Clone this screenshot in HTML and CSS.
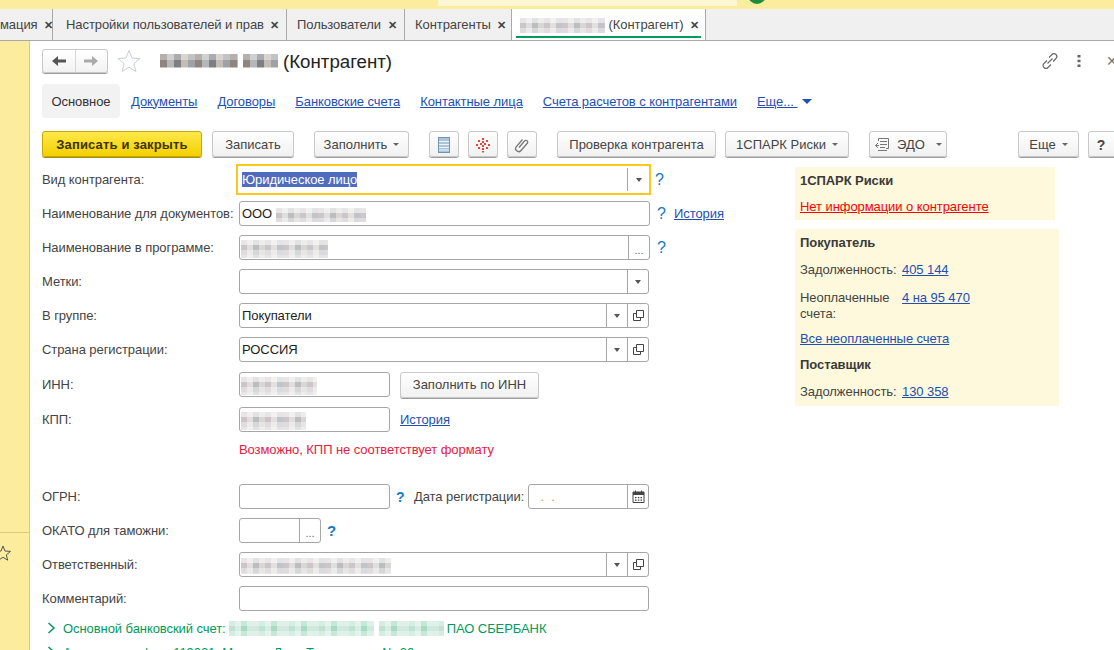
FILE: index.html
```html
<!DOCTYPE html>
<html lang="ru">
<head>
  <meta charset="UTF-8" />
  <title>(Контрагент)</title>
  <link rel="stylesheet" href="styles.css">
</head>
<body>

<!-- Top strip, mostly cut off by the window -->
<div class="top-strip">
  <span class="strip-text">Информация для пользователя</span>
  <div class="strip-box"></div>
  <div class="strip-dot"></div>
  <span class="strip-text strip-text-right">Подключение к сервису</span>
</div>

<!-- Open tabs -->
<div class="tabs">
  <div class="tab tab-cut">мация <span class="tab-x">✕</span></div>
  <div class="tab tab-settings">Настройки пользователей и прав <span class="tab-x">✕</span></div>
  <div class="tab tab-users">Пользователи <span class="tab-x">✕</span></div>
  <div class="tab tab-partners">Контрагенты <span class="tab-x">✕</span></div>
  <div class="tab tab-active"><span class="smear smear-tab"></span> (Контрагент) <span class="tab-x">✕</span></div>
</div>

<div class="page">
  <!-- Left yellow panel -->
  <div class="sidebar">
    <div class="side-line"></div>
    <svg class="side-star" width="18" height="18" viewBox="0 0 18 18"><path d="M9 2l2 5 5.500.4-4.200 3.500 1.400 5.300L9 13.300 4.300 16.200l1.400-5.300L1.500 7.400 7 7z" fill="none" stroke="#555" stroke-width="1"/></svg>
  </div>

  <div class="main">
    <!-- Title -->
    <div class="title-row">
      <div class="nav-arrows">
        <div class="nav-arrow nav-left">
          <svg width="16" height="12" viewBox="0 0 16 12"><path d="M1 6l6-5v3.500h8v3H7V11z" fill="#555"/></svg>
        </div>
        <div class="nav-arrow">
          <svg width="16" height="12" viewBox="0 0 16 12"><path d="M15 6L9 1v3.500H1v3h8V11z" fill="#aaa"/></svg>
        </div>
      </div>
      <svg class="title-star" width="24" height="24" viewBox="0 0 24 24"><path d="M12 1.500l3 7.500 8 .6-6.100 5.100 2 7.800L12 18.200l-6.900 4.300 2-7.800L1 9.600 9 9z" fill="#fff" stroke="#c9ced4" stroke-width="1"/></svg>
      <span class="smear smear-dark smear-title"></span>
      <span class="smear smear-dark smear-title2"></span>
      <h1>(Контрагент)</h1>
      <div class="title-icons">
        <svg width="18" height="18" viewBox="0 0 18 18"><g fill="none" stroke="#666" stroke-width="1.100"><path d="M8 5.500l3-3a2.800 2.800 0 0 1 4 4l-3 3"/><path d="M10 12.500l-3 3a2.800 2.800 0 0 1-4-4l3-3"/><path d="M6.500 11.500l5-5"/></g></svg>
        <svg class="kebab" width="4" height="14" viewBox="0 0 4 14"><g fill="#666"><rect x="0.500" y="1" width="3" height="2.500"/><rect x="0.500" y="5.700" width="3" height="2.500"/><rect x="0.500" y="10.500" width="3" height="2.500"/></g></svg>
        <span class="close-x">✕</span>
      </div>
    </div>

    <!-- Form sections -->
    <div class="sections">
      <div class="section section-active">Основное</div>
      <a class="section">Документы</a>
      <a class="section">Договоры</a>
      <a class="section">Банковские счета</a>
      <a class="section">Контактные лица</a>
      <a class="section">Счета расчетов с контрагентами</a>
      <a class="section section-more">Еще... <i class="more-arrow"></i></a>
    </div>

    <!-- Command bar -->
    <div class="toolbar">
      <button class="btn btn-main">Записать и закрыть</button>
      <button class="btn btn-save">Записать</button>
      <button class="btn btn-fill">Заполнить <i class="caret"></i></button>
      <button class="btn btn-icon">
        <svg width="14" height="18" viewBox="0 0 14 18"><rect x="1.500" y="1.500" width="11" height="15" fill="#a9c4dc" stroke="#6f93b1"/><path d="M2 5.500h10M2 8.500h10M2 11.500h10M2 14h10" stroke="#eef4f9"/></svg>
      </button>
      <button class="btn btn-icon btn-spark">
        <svg width="16" height="16" viewBox="0 0 16 16"><g fill="#e0493a"><rect x="7" y="1" width="2" height="2"/><rect x="3" y="3" width="2" height="2"/><rect x="11" y="3" width="2" height="2"/><rect x="7" y="4" width="2" height="2"/><rect x="1" y="7" width="2" height="2"/><rect x="5" y="6" width="2" height="2"/><rect x="9" y="6" width="2" height="2"/><rect x="13" y="7" width="2" height="2"/><rect x="7" y="8" width="2" height="2"/><rect x="3" y="10" width="2" height="2"/><rect x="11" y="10" width="2" height="2"/><rect x="7" y="11" width="2" height="2"/><rect x="7" y="14" width="2" height="1.500"/></g></svg>
      </button>
      <button class="btn btn-icon btn-clip">
        <svg width="16" height="16" viewBox="0 0 16 16"><path d="M5 10.500l5.500-6.500a1.800 1.800 0 0 1 2.800 2.300L7 13.500a3 3 0 0 1-4.600-3.900L8.500 2.500" fill="none" stroke="#777" stroke-width="1.300"/></svg>
      </button>
      <button class="btn btn-check">Проверка контрагента</button>
      <button class="btn btn-spark-risk">1СПАРК Риски <i class="caret"></i></button>
      <button class="btn btn-edo">
        <svg width="18" height="16" viewBox="0 0 18 16"><g fill="none" stroke="#777"><path d="M4.500 4V1.500h10v10H12"/><path d="M6 4.500h7M6 7.500h7M6 10.500h5M4 13.500h9"/><path d="M4 6L1.500 8.500 4 11"/><path d="M1.500 8.500H5"/></g></svg>
        ЭДО <i class="caret"></i>
      </button>
      <button class="btn btn-more">Еще <i class="caret"></i></button>
      <button class="btn btn-help">?</button>
    </div>

    <div class="content">
      <!-- Fields -->
      <div class="form">
        <div class="row">
          <label>Вид контрагента:</label>
          <div class="field field-focus">
            <span class="field-text"><span class="selected">Юридическое лицо</span></span>
            <span class="field-btn field-btn-focus"><i class="caret caret-dark"></i></span>
          </div>
          <span class="help help-focus">?</span>
        </div>
        <div class="row">
          <label>Наименование для документов:</label>
          <div class="field field-wide">
            <span class="field-text">ООО <span class="smear smear-name"></span></span>
          </div>
          <span class="help">?</span>
          <a class="link history">История</a>
        </div>
        <div class="row">
          <label>Наименование в программе:</label>
          <div class="field field-wide">
            <span class="field-text"><span class="smear smear-short"></span></span>
            <span class="field-btn field-dots">...</span>
          </div>
          <span class="help">?</span>
        </div>
        <div class="row">
          <label>Метки:</label>
          <div class="field">
            <span class="field-text"></span>
            <span class="field-btn"><i class="caret caret-dark"></i></span>
          </div>
        </div>
        <div class="row">
          <label>В группе:</label>
          <div class="field">
            <span class="field-text">Покупатели</span>
            <span class="field-btn"><i class="caret caret-dark"></i></span>
            <span class="field-btn"><svg width="11" height="11" viewBox="0 0 11 11"><path d="M3.500.5h7v7h-7zM3.500 3.500H.5v7h7V7.500" fill="none" stroke="#444"/></svg></span>
          </div>
        </div>
        <div class="row">
          <label>Страна регистрации:</label>
          <div class="field">
            <span class="field-text">РОССИЯ</span>
            <span class="field-btn"><i class="caret caret-dark"></i></span>
            <span class="field-btn"><svg width="11" height="11" viewBox="0 0 11 11"><path d="M3.500.5h7v7h-7zM3.500 3.500H.5v7h7V7.500" fill="none" stroke="#444"/></svg></span>
          </div>
        </div>
        <div class="row row-tall">
          <label>ИНН:</label>
          <div class="field field-mid">
            <span class="field-text"><span class="smear smear-inn"></span></span>
          </div>
          <button class="btn btn-inn">Заполнить по ИНН</button>
        </div>
        <div class="row row-tall">
          <label>КПП:</label>
          <div class="field field-mid">
            <span class="field-text"><span class="smear smear-kpp"></span></span>
          </div>
          <a class="link kpp-history">История</a>
        </div>
        <div class="error">Возможно, КПП не соответствует формату</div>
        <div class="row">
          <label>ОГРН:</label>
          <div class="field field-mid">
            <span class="field-text"></span>
          </div>
          <span class="help help-ogrn">?</span>
          <span class="date-label">Дата регистрации:</span>
          <div class="field field-date">
            <span class="field-text date-mask">&nbsp;.&nbsp;&nbsp;.</span>
            <span class="field-btn"><svg width="13" height="13" viewBox="0 0 13 13"><path d="M1 2h11v10.500H1z" fill="none" stroke="#444"/><path d="M1 2h11v3H1z" fill="#444"/><path d="M3.500.5v2M9.500.5v2" stroke="#444"/><path d="M3 7h1.500v1.300H3zM5.800 7h1.500v1.300H5.800zM8.500 7H10v1.300H8.500zM3 9.500h1.500v1.300H3zM5.800 9.500h1.500v1.300H5.800zM8.500 9.500H10v1.300H8.500z" fill="#444"/></svg></span>
          </div>
        </div>
        <div class="row">
          <label>ОКАТО для таможни:</label>
          <div class="field field-small">
            <span class="field-text"></span>
            <span class="field-btn field-dots">...</span>
          </div>
          <span class="help help-okato">?</span>
        </div>
        <div class="row">
          <label>Ответственный:</label>
          <div class="field">
            <span class="field-text"><span class="smear smear-person"></span></span>
            <span class="field-btn"><i class="caret caret-dark"></i></span>
            <span class="field-btn"><svg width="11" height="11" viewBox="0 0 11 11"><path d="M3.500.5h7v7h-7zM3.500 3.500H.5v7h7V7.500" fill="none" stroke="#444"/></svg></span>
          </div>
        </div>
        <div class="row">
          <label>Комментарий:</label>
          <div class="field">
            <span class="field-text"></span>
          </div>
        </div>
        <div class="group">
          <svg width="9" height="12" viewBox="0 0 9 12"><path d="M1.500 1l5.500 5-5.500 5" fill="none" stroke="#009a5c" stroke-width="1.500"/></svg>
          <span>Основной банковский счет:</span>
          <span class="smear smear-green smear-bank"></span>
          <span class="smear smear-green smear-bank2"></span>
          <span>ПАО СБЕРБАНК</span>
        </div>
        <div class="group">
          <svg width="9" height="12" viewBox="0 0 9 12"><path d="M1.500 1l5.500 5-5.500 5" fill="none" stroke="#009a5c" stroke-width="1.500"/></svg>
          <span>Адрес и телефон: 119021, Москва, Льва Толстого ул, № 20</span>
        </div>
      </div>

      <!-- Info on the right -->
      <div class="aside">
        <div class="note note-risk">
          <b>1СПАРК Риски</b>
          <a class="link link-red gap-10">Нет информации о контрагенте</a>
        </div>
        <div class="note note-debt">
          <b>Покупатель</b>
          <div class="pair gap-11"><span class="pair-label">Задолженность:</span> <a class="link">405 144</a></div>
          <div class="pair gap-12"><span class="pair-label">Неоплаченные счета:</span> <a class="link">4 на 95 470</a></div>
          <a class="link gap-9">Все неоплаченные счета</a>
          <b class="gap-10">Поставщик</b>
          <div class="pair gap-11"><span class="pair-label">Задолженность:</span> <a class="link">130 358</a></div>
        </div>
      </div>
    </div>
  </div>
</div>

</body>
</html>
```

FILE: styles.css
```css
* { margin: 0; padding: 0; box-sizing: border-box; }
html, body { height: 650px; overflow: hidden; }
body {
  font-family: "Liberation Sans", Arial, sans-serif;
  font-size: 13px;
  line-height: 16px;
  letter-spacing: -.07px;
  color: #444;
  background: #fff;
}

/* top strip */
.top-strip {
  height: 9px;
  background: #fbec9e;
  display: flex;
  align-items: flex-end;
  overflow: hidden;
  position: relative;
}
.strip-text { height: 16px; flex: none; margin-left: 30px; width: 408px; color: #555; margin-bottom: 8px; white-space: nowrap; }
.strip-box { width: 299px; height: 6px; background: #fdf6d2; align-self: flex-start; flex: none; }
.strip-dot { width: 18px; height: 18px; border-radius: 50%; background: #1d8f3c; flex: none; margin-left: 11px; margin-bottom: 5px; }
.strip-text-right { margin-left: 14px; width: 300px; }

/* tabs */
.tabs {
  height: 32px;
  background: #f0f0f0;
  border-bottom: 1px solid #a9a9a9;
  display: flex;
  overflow: hidden;
}
.tab {
  height: 31px;
  line-height: 31px;
  border-right: 1px solid #a9a9a9;
  color: #444;
  white-space: nowrap;
  flex: none;
  position: relative;
}
.tab-x { color: #444; font-size: 11px; font-weight: bold; margin-left: 3px; }
.tab-cut { width: 53px; text-align: right; padding-right: 4px; }
.tab-settings { width: 234px; padding-left: 13px; }
.tab-users { width: 118px; padding-left: 10px; }
.tab-partners { width: 107px; padding-left: 10px; }
.tab-active { width: 194px; padding-left: 8px; background: #fff; }
.tab-active::after {
  content: "";
  position: absolute;
  left: 4px; right: 4px; bottom: 2px;
  height: 2px;
  background: #009a5c;
}

/* page */
.page { display: flex; height: 609px; overflow: hidden; }
.sidebar {
  width: 30px;
  flex: none;
  background: #fbec9e;
  border-right: 1px solid #d8cb7c;
  position: relative;
}
.side-line { position: absolute; top: 491px; left: 0; right: 0; height: 1px; background: #d8cb7c; }
.side-star { position: absolute; left: -6px; top: 503px; }
.main { flex: 1; min-width: 0; padding-left: 12px; overflow: hidden; }

/* title */
.title-row { display: flex; align-items: center; height: 24px; margin-top: 8px; }
.nav-arrows {
  display: flex;
  width: 66px; height: 24px;
  border: 1px solid #c8c8c8;
  border-radius: 3px;
  box-shadow: 0 1px 0 #9e9e9e;
  background: linear-gradient(#fff, #f2f2f2);
}
.nav-arrow { flex: 1; display: flex; align-items: center; justify-content: center; }
.nav-left { border-right: 1px solid #d8d8d8; }
.title-star { margin-left: 9px; flex: none; }
.smear-title { width: 78px; height: 20px; margin-left: 19px; }
.smear-title2 { width: 35px; height: 20px; margin-left: 5px; margin-right: 5px; }
h1 { font-size: 18.7px; font-weight: normal; color: #222; line-height: 24px; letter-spacing: 0; padding-top: 1px; }
.title-icons { margin-left: auto; display: flex; align-items: center; }
.kebab { margin-left: 18px; }
.close-x { margin-left: 25px; width: 10px; color: #777; font-size: 14px; overflow: hidden; flex: none; margin-right: -2px; }

/* smeared text */
.smear {
  display: inline-block;
  vertical-align: middle;
  height: 14px;
  background:
    repeating-linear-gradient(180deg, rgba(255,255,255,.6) 0 5px, rgba(255,255,255,.1) 5px 10px, rgba(255,255,255,.45) 10px 15px),
    repeating-linear-gradient(90deg, #c7bfc3 0 6px, #dcd9db 6px 12px, #b4b6b8 12px 18px, #d4d2cf 18px 24px, #c6bfc4 24px 30px, #dfddd9 30px 36px, #bcbcc4 36px 42px);
}
.smear-dark {
  background:
    repeating-linear-gradient(180deg, rgba(255,255,255,.35) 0 6px, rgba(255,255,255,0) 6px 13px, rgba(255,255,255,.5) 13px 20px),
    repeating-linear-gradient(90deg, #8f8580 0 7px, #b5b7b9 7px 14px, #7d7f83 14px 21px, #c4bdb5 21px 28px, #9fa2a5 28px 35px);
}
.smear-tab { width: 85px; height: 15px; }
.smear-name { width: 90px; }
.smear-short { width: 87px; height: 18px; margin-left: -1px; }
.smear-inn { width: 76px; height: 18px; margin-left: -1px; }
.smear-kpp { width: 65px; height: 18px; margin-left: -1px; }
.smear-person { width: 150px; height: 16px; margin-left: -1px; }
.smear-green {
  background:
    repeating-linear-gradient(180deg, rgba(255,255,255,.35) 0 5px, rgba(255,255,255,0) 5px 10px, rgba(255,255,255,.35) 10px 15px),
    repeating-linear-gradient(90deg, #bfe3d3 0 6px, #d6ede3 6px 12px, #a9dac4 12px 18px, #cfe9de 18px 30px);
}
.smear-bank { width: 145px; height: 15px; }
.smear-bank2 { width: 65px; height: 15px; margin-left: 2px; }

/* sections */
.sections { display: flex; align-items: center; height: 34px; margin-top: 11px; }
.section { color: #1f4fb4; text-decoration: underline; margin-right: 20px; white-space: nowrap; padding-top: 1px; }
.section-active {
  width: 78px; height: 34px; line-height: 34px;
  text-align: center;
  background: #f2f2f2;
  border-radius: 4px;
  color: #333;
  text-decoration: none;
  margin-right: 11px;
}
.more-arrow {
  display: inline-block;
  border: 5px solid transparent;
  border-top-color: #1f4fb4;
  border-bottom: 0;
  margin-left: 5px;
  vertical-align: 2px;
}

/* buttons */
.toolbar { display: flex; height: 26px; margin-top: 13px; width: 1090px; }
.btn {
  height: 26px;
  flex: none;
  font: inherit;
  color: #444;
  background: linear-gradient(#fff, #f1f1f1);
  border: 1px solid #c8c8c8;
  border-radius: 3px;
  box-shadow: 0 1px 0 #9e9e9e;
  display: flex;
  align-items: center;
  justify-content: center;
  white-space: nowrap;
  padding-top: 1px;
}
.btn-main {
  width: 160px;
  font-weight: bold;
  letter-spacing: .15px;
  color: #3d3200;
  background: linear-gradient(#ffe94a, #f3d000);
  border-color: #c8a800;
  box-shadow: 0 1px 0 #a58c00;
}
.btn-save { width: 82px; margin-left: 10px; }
.btn-fill { width: 95px; margin-left: 20px; }
.btn-icon { width: 30px; margin-left: 20px; }
.btn-spark, .btn-clip { margin-left: 9px; }
.btn-check { width: 159px; margin-left: 20px; }
.btn-spark-risk { width: 124px; margin-left: 9px; }
.btn-edo { width: 78px; margin-left: 20px; gap: 5px; }
.btn-more { width: 61px; margin-left: 71px; }
.btn-help { width: 30px; margin-left: 9px; font-weight: bold; font-size: 14px; padding-right: 4px; }
.caret {
  display: inline-block;
  border: 3px solid transparent;
  border-top: 3px solid #666;
  border-bottom: 0;
  margin-left: 6px;
}
.caret-dark { border-top-color: #555; margin-left: 0; border-width: 4px 3.500px 0; }

/* form */
.content { display: flex; margin-top: 10px; }
.form { width: 753px; flex: none; }
.row { display: flex; align-items: center; height: 25px; margin-bottom: 9px; }
.row-tall { margin-top: 10px; }
label { width: 197px; flex: none; white-space: nowrap; }
.field {
  width: 410px;
  height: 25px;
  flex: none;
  display: flex;
  background: #fff;
  border: 1px solid #a6a6a6;
  border-radius: 3px;
  color: #222;
}
.field-wide { width: 411px; }
.field-mid { width: 151px; }
.field-small { width: 82px; }
.field-date { width: 121px; margin-left: 5px; }
.field-text { flex: 1; min-width: 0; padding-left: 2px; line-height: 24px; white-space: nowrap; overflow: hidden; }
.field-btn {
  width: 21px;
  flex: none;
  border-left: 1px solid #a6a6a6;
  display: flex;
  align-items: center;
  justify-content: center;
}
.field-dots { color: #666; padding-top: 4px; font-size: 11px; }
.field-focus {
  width: 415px;
  height: 31px;
  margin: -3px 0 -3px -3px;
  border: 2px solid #fcc81e;
  border-radius: 0;
}
.field-focus .field-text { padding-left: 4px; line-height: 27px; }
.field-btn-focus { margin: 2px 0; width: 22px; }
.selected { background: #4f6bbf; color: #fff; }
.help { color: #1279c4; font-size: 16px; margin-left: 7px; width: 10px; flex: none; }
.help-focus { margin-left: 4px; }
.help-ogrn { margin-left: 6px; font-size: 14px; font-weight: bold; }
.help-okato { margin-left: 6px; font-size: 15px; font-weight: bold; }
.date-label { margin-left: 8px; width: 109px; white-space: nowrap; flex: none; }
.date-mask { color: #c8a020; padding-left: 8px; }
.link { color: #1f4fb4; text-decoration: underline; }
.history { margin-left: 7px; }
.btn-inn { width: 139px; margin-left: 10px; }
.kpp-history { margin-left: 10px; }
.error { color: #e8203f; margin-left: 197px; height: 17px; padding-top: 1px; margin-bottom: 26px; }
.group { display: flex; align-items: center; gap: 3px; color: #009a5c; height: 16px; margin-bottom: 8px; padding-left: 5px; white-space: nowrap; }
.group span:not(.smear) { padding-top: 1px; }
.group svg { margin-right: 4px; }

/* right notes */
.aside { display: flex; flex-direction: column; gap: 9px; flex: none; }
.note { background: #fef8dc; padding: 6px 5px 4px; display: flex; flex-direction: column; align-items: flex-start; }
.note b { color: #3a3a3a; }
.note-risk { width: 260px; height: 53px; }
.note-debt { width: 264px; height: 177px; }
.link-red { color: #f00; }
.pair { display: flex; }
.pair-label { width: 102px; flex: none; }
.gap-9 { margin-top: 9px; }
.gap-10 { margin-top: 10px; }
.gap-11 { margin-top: 11px; }
.gap-12 { margin-top: 12px; }
```
